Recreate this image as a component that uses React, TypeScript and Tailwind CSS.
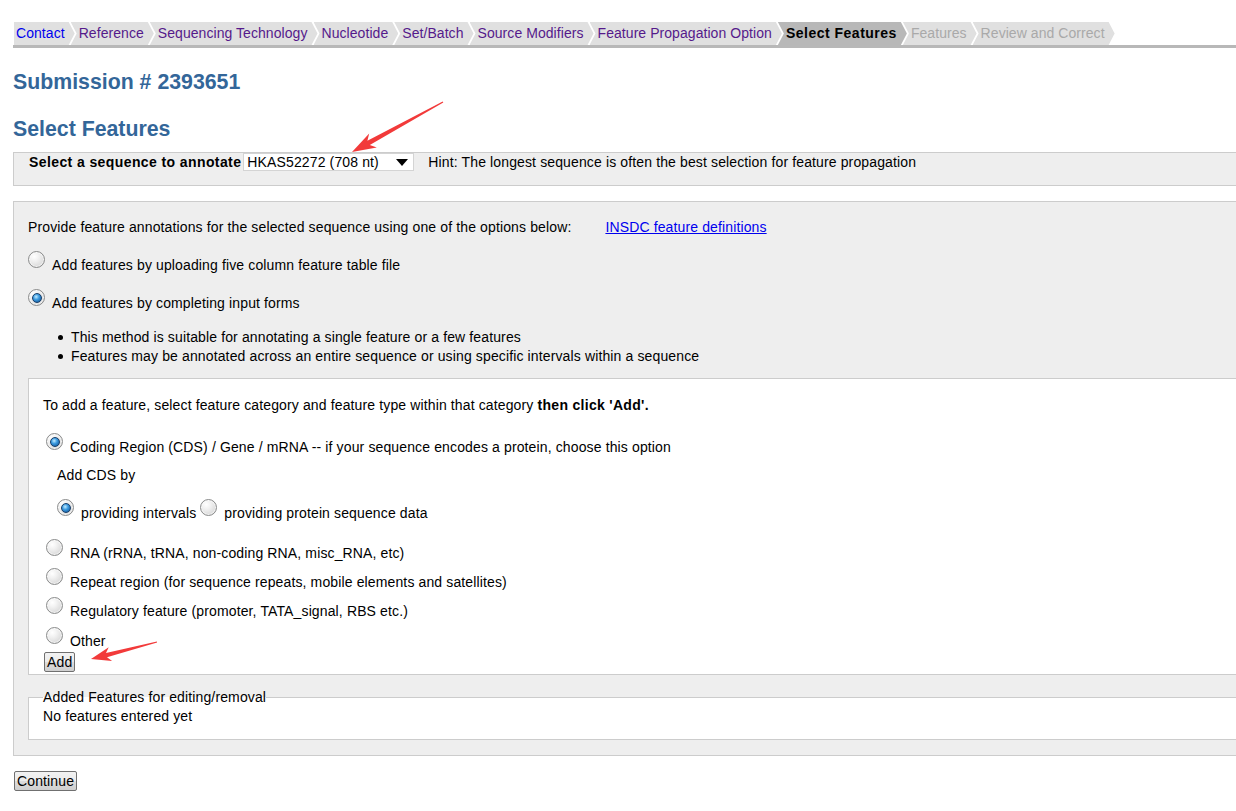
import React from "react";

const tabs: { label: string; kind: "blue" | "purple" | "active" | "disabled" }[] = [
  { label: "Contact", kind: "blue" },
  { label: "Reference", kind: "purple" },
  { label: "Sequencing Technology", kind: "purple" },
  { label: "Nucleotide", kind: "purple" },
  { label: "Set/Batch", kind: "purple" },
  { label: "Source Modifiers", kind: "purple" },
  { label: "Feature Propagation Option", kind: "purple" },
  { label: "Select Features", kind: "active" },
  { label: "Features", kind: "disabled" },
  { label: "Review and Correct", kind: "disabled" },
];

function Radio({ checked }: { checked?: boolean }) {
  return (
    <span className="relative inline-flex shrink-0 w-[17px] h-[17px] rounded-full border border-[#8a8b8b] bg-[radial-gradient(circle_at_35%_30%,#ffffff_0%,#f2f2f2_30%,#cdcdcd_100%)] items-center justify-center shadow-[inset_0_0_0_1px_rgba(255,255,255,0.6)]">
      {checked && (
        <span className="w-[10px] h-[10px] rounded-full border border-[#173e69] bg-[radial-gradient(circle_at_40%_35%,#c2ecff_0%,#3c9be0_40%,#0d4a8c_100%)]" />
      )}
    </span>
  );
}

function RadioRow({
  checked,
  children,
  className = "",
}: {
  checked?: boolean;
  children: React.ReactNode;
  className?: string;
}) {
  return (
    <div className={"flex items-start " + className}>
      <Radio checked={checked} />
      <span className="ml-[7px] mt-[4px] leading-[20px]">{children}</span>
    </div>
  );
}

function Btn({ children, className = "" }: { children: React.ReactNode; className?: string }) {
  return (
    <button
      className={
        "block h-[20px] px-[2px] leading-[17px] text-[14px] text-black border border-[#707070] rounded-[2px] bg-[linear-gradient(#f2f2f2,#ebebeb_50%,#dddddd_51%,#cfcfcf)] " +
        className
      }
    >
      {children}
    </button>
  );
}

export default function App() {
  return (
    <div className="relative min-h-[811px] overflow-hidden bg-white pl-[13px] font-['Liberation_Sans',Arial,sans-serif] text-[14px] tracking-[0.13px] text-black">
      {/* Tabs */}
      <div className="pt-[22px]">
        <div className="flex border-b-[3px] border-[#b8b8b8] pl-[1px] tracking-[0.06px]">
          {tabs.map((t, i) => {
            const bg = t.kind === "active" ? "bg-[#b8b8b8]" : "bg-[#e0e0e0]";
            const color =
              t.kind === "blue"
                ? "text-[#0000ee]"
                : t.kind === "purple"
                ? "text-[#551a8b]"
                : t.kind === "active"
                ? "text-black font-bold tracking-[0.5px]"
                : "text-[#a9a9a9]";
            const shape =
              i === 0
                ? "pl-[2px] [clip-path:polygon(0_0,calc(100%_-_6px)_0,100%_50%,calc(100%_-_6px)_100%,0_100%)]"
                : "pl-[8px] ml-[-4px] [clip-path:polygon(0_0,calc(100%_-_6px)_0,100%_50%,calc(100%_-_6px)_100%,0_100%,6px_50%)]";
            return (
              <div key={t.label} className={`${bg} ${color} ${shape} h-[23px] pr-[10px] leading-[23px] whitespace-nowrap`}>
                {t.label}
              </div>
            );
          })}
        </div>
      </div>

      <h2 className="mt-[21px] text-[21.3px] leading-[26px] font-bold tracking-normal text-[#336699]">Submission # 2393651</h2>
      <h2 className="mt-[21px] text-[21.3px] leading-[26px] font-bold tracking-normal text-[#336699]">Select Features</h2>

      {/* Sequence select panel */}
      <div className="mt-[10px] w-[1240px] h-[34px] border border-[#cccccc] bg-[#eeeeee] pl-[15px]">
        <div className="flex items-center h-[18px]">
          <span className="font-bold tracking-[0.4px]">Select a sequence to annotate</span>
          <div className="ml-[2px] flex items-center w-[171px] h-[18px] bg-white border border-[#d4d4d4] pl-[3px] pr-[4px]">
            <span className="flex-1 leading-[16px]">HKAS52272 (708 nt)</span>
            <svg width="12" height="7" viewBox="0 0 12 7" className="mr-[1px]">
              <path d="M0 0 H12 L6 7 Z" fill="#000" />
            </svg>
          </div>
          <span className="ml-[14px]">Hint: The longest sequence is often the best selection for feature propagation</span>
        </div>
      </div>

      {/* Main panel */}
      <div className="mt-[15px] w-[1240px] border border-[#cccccc] bg-[#eeeeee] pl-[14px] pt-[15px] pb-[15px]">
        <div className="flex leading-[20px]">
          <span>Provide feature annotations for the selected sequence using one of the options below:</span>
          <a className="ml-[34px] text-[#0000ee] underline" href="#">INSDC feature definitions</a>
        </div>

        <RadioRow className="mt-[14px]">Add features by uploading five column feature table file</RadioRow>
        <RadioRow className="mt-[14px]" checked>
          Add features by completing input forms
        </RadioRow>

        <div className="mt-[15px] leading-[19px]">
          {[
            "This method is suitable for annotating a single feature or a few features",
            "Features may be annotated across an entire sequence or using specific intervals within a sequence",
          ].map((s) => (
            <div key={s} className="flex items-center pl-[30px]">
              <span className="w-[5px] h-[5px] rounded-full bg-black" />
              <span className="ml-[8px]">{s}</span>
            </div>
          ))}
        </div>

        {/* Inner white box */}
        <div className="mt-[12px] border border-[#cccccc] bg-white pl-[14px] pt-[16px] pb-[2px]">
          <div className="leading-[20px]">
            To add a feature, select feature category and feature type within that category{" "}
            <b className="tracking-[0.3px]">then click 'Add'.</b>
          </div>
          <RadioRow className="mt-[18px] ml-[3px]" checked>
            Coding Region (CDS) / Gene / mRNA -- if your sequence encodes a protein, choose this option
          </RadioRow>
          <div className="mt-[8px] ml-[14px] leading-[20px]">Add CDS by</div>
          <div className="mt-[14px] ml-[14px] flex items-start">
            <Radio checked />
            <span className="ml-[7px] mt-[4px] leading-[20px]">providing intervals</span>
            <span className="ml-[4px]">
              <Radio />
            </span>
            <span className="ml-[7px] mt-[4px] leading-[20px]">providing protein sequence data</span>
          </div>
          <RadioRow className="mt-[16px] ml-[3px]">RNA (rRNA, tRNA, non-coding RNA, misc_RNA, etc)</RadioRow>
          <RadioRow className="mt-[5px] ml-[3px]">Repeat region (for sequence repeats, mobile elements and satellites)</RadioRow>
          <RadioRow className="mt-[5px] ml-[3px]">Regulatory feature (promoter, TATA_signal, RBS etc.)</RadioRow>
          <RadioRow className="mt-[6px] ml-[3px]">Other</RadioRow>
          <Btn className="mt-[1px] ml-[1px]">Add</Btn>
        </div>

        <fieldset className="mt-[12px] border border-[#cccccc] bg-white pl-[14px] pb-[14px]">
          <legend className="leading-[20px] p-0">Added Features for editing/removal</legend>
          <div className="leading-[18px]">No features entered yet</div>
        </fieldset>
      </div>

      <Btn className="mt-[15px] ml-[1px]">Continue</Btn>

      {/* Red annotation arrows */}
      <svg className="absolute left-0 top-0 pointer-events-none" width="1236" height="811">
        <polygon
          points="352,152 376.8,147.5 369.8,145.1 443.3,102.5 442.7,101.5 367.4,140.7 369.2,133.5"
          fill="#f23a3a"
        />
        <polygon
          points="91,659 112.1,660.9 107,657.2 157.1,642.6 156.9,641.4 106,653 108.7,647.3"
          fill="#f23a3a"
        />
      </svg>
    </div>
  );
}
